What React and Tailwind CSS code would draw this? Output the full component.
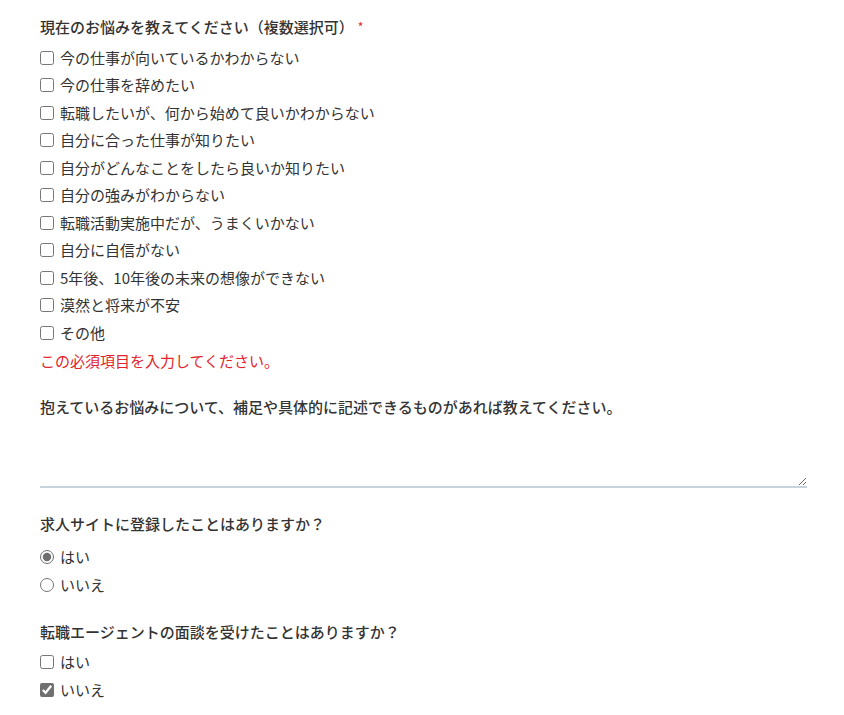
import React, { useState } from 'react';

const worries = [
  '今の仕事が向いているかわからない',
  '今の仕事を辞めたい',
  '転職したいが、何から始めて良いかわからない',
  '自分に合った仕事が知りたい',
  '自分がどんなことをしたら良いか知りたい',
  '自分の強みがわからない',
  '転職活動実施中だが、うまくいかない',
  '自分に自信がない',
  '5年後、10年後の未来の想像ができない',
  '漠然と将来が不安',
  'その他',
];

const Label = ({ children, required, className = '' }) => (
  <p className={`text-[15px] leading-[22px] font-medium text-[#333] ${className}`}>
    {children}
    {required && <span className="ml-[4px] text-[12px] text-[#e3242b] font-normal align-top">*</span>}
  </p>
);

const Option = ({ type, name, label, checked, onChange }) => (
  <label className="flex items-center h-[27.5px] text-[15px] text-[#333] cursor-pointer">
    <input
      type={type}
      name={name}
      checked={checked}
      onChange={onChange}
      className="m-0 w-[14px] h-[14px] accent-[#6f6f6f]"
    />
    <span className="ml-[6px] leading-[22px]">{label}</span>
  </label>
);

const App = () => {
  const [selected, setSelected] = useState([]);
  const [siteRegistered, setSiteRegistered] = useState('yes');
  const [agent, setAgent] = useState({ yes: false, no: true });

  const toggle = (item) => {
    setSelected((prev) =>
      prev.includes(item) ? prev.filter((x) => x !== item) : [...prev, item]
    );
  };

  return (
    <div
      className="bg-white min-h-[715px] pl-[40px] pr-[37px] pt-[16px] pb-[20px]"
      style={{ fontFamily: '"Noto Sans CJK JP", "Noto Sans", sans-serif' }}
    >
      <Label required>現在のお悩みを教えてください（複数選択可）</Label>

      <div className="mt-[6px]">
        {worries.map((w) => (
          <Option
            key={w}
            type="checkbox"
            name="worries"
            label={w}
            checked={selected.includes(w)}
            onChange={() => toggle(w)}
          />
        ))}
      </div>

      <p className="mt-[3px] text-[15px] leading-[22px] text-[#e3242b]">
        この必須項目を入力してください。
      </p>

      <Label className="mt-[24px]">
        抱えているお悩みについて、補足や具体的に記述できるものがあれば教えてください。
      </Label>

      <textarea
        className="block w-full h-[70px] mt-0 p-2 text-[15px] text-[#333] border-0 border-b-2 border-[#c8d2dc] outline-none resize-y bg-white"
      />

      <Label className="mt-[25px]">求人サイトに登録したことはありますか？</Label>

      <div className="mt-[9px]">
        <Option
          type="radio"
          name="site"
          label="はい"
          checked={siteRegistered === 'yes'}
          onChange={() => setSiteRegistered('yes')}
        />
        <Option
          type="radio"
          name="site"
          label="いいえ"
          checked={siteRegistered === 'no'}
          onChange={() => setSiteRegistered('no')}
        />
      </div>

      <Label className="mt-[22px]">転職エージェントの面談を受けたことはありますか？</Label>

      <div className="mt-[6px]">
        <Option
          type="checkbox"
          name="agent"
          label="はい"
          checked={agent.yes}
          onChange={() => setAgent({ ...agent, yes: !agent.yes })}
        />
        <Option
          type="checkbox"
          name="agent"
          label="いいえ"
          checked={agent.no}
          onChange={() => setAgent({ ...agent, no: !agent.no })}
        />
      </div>
    </div>
  );
};

export default App;
